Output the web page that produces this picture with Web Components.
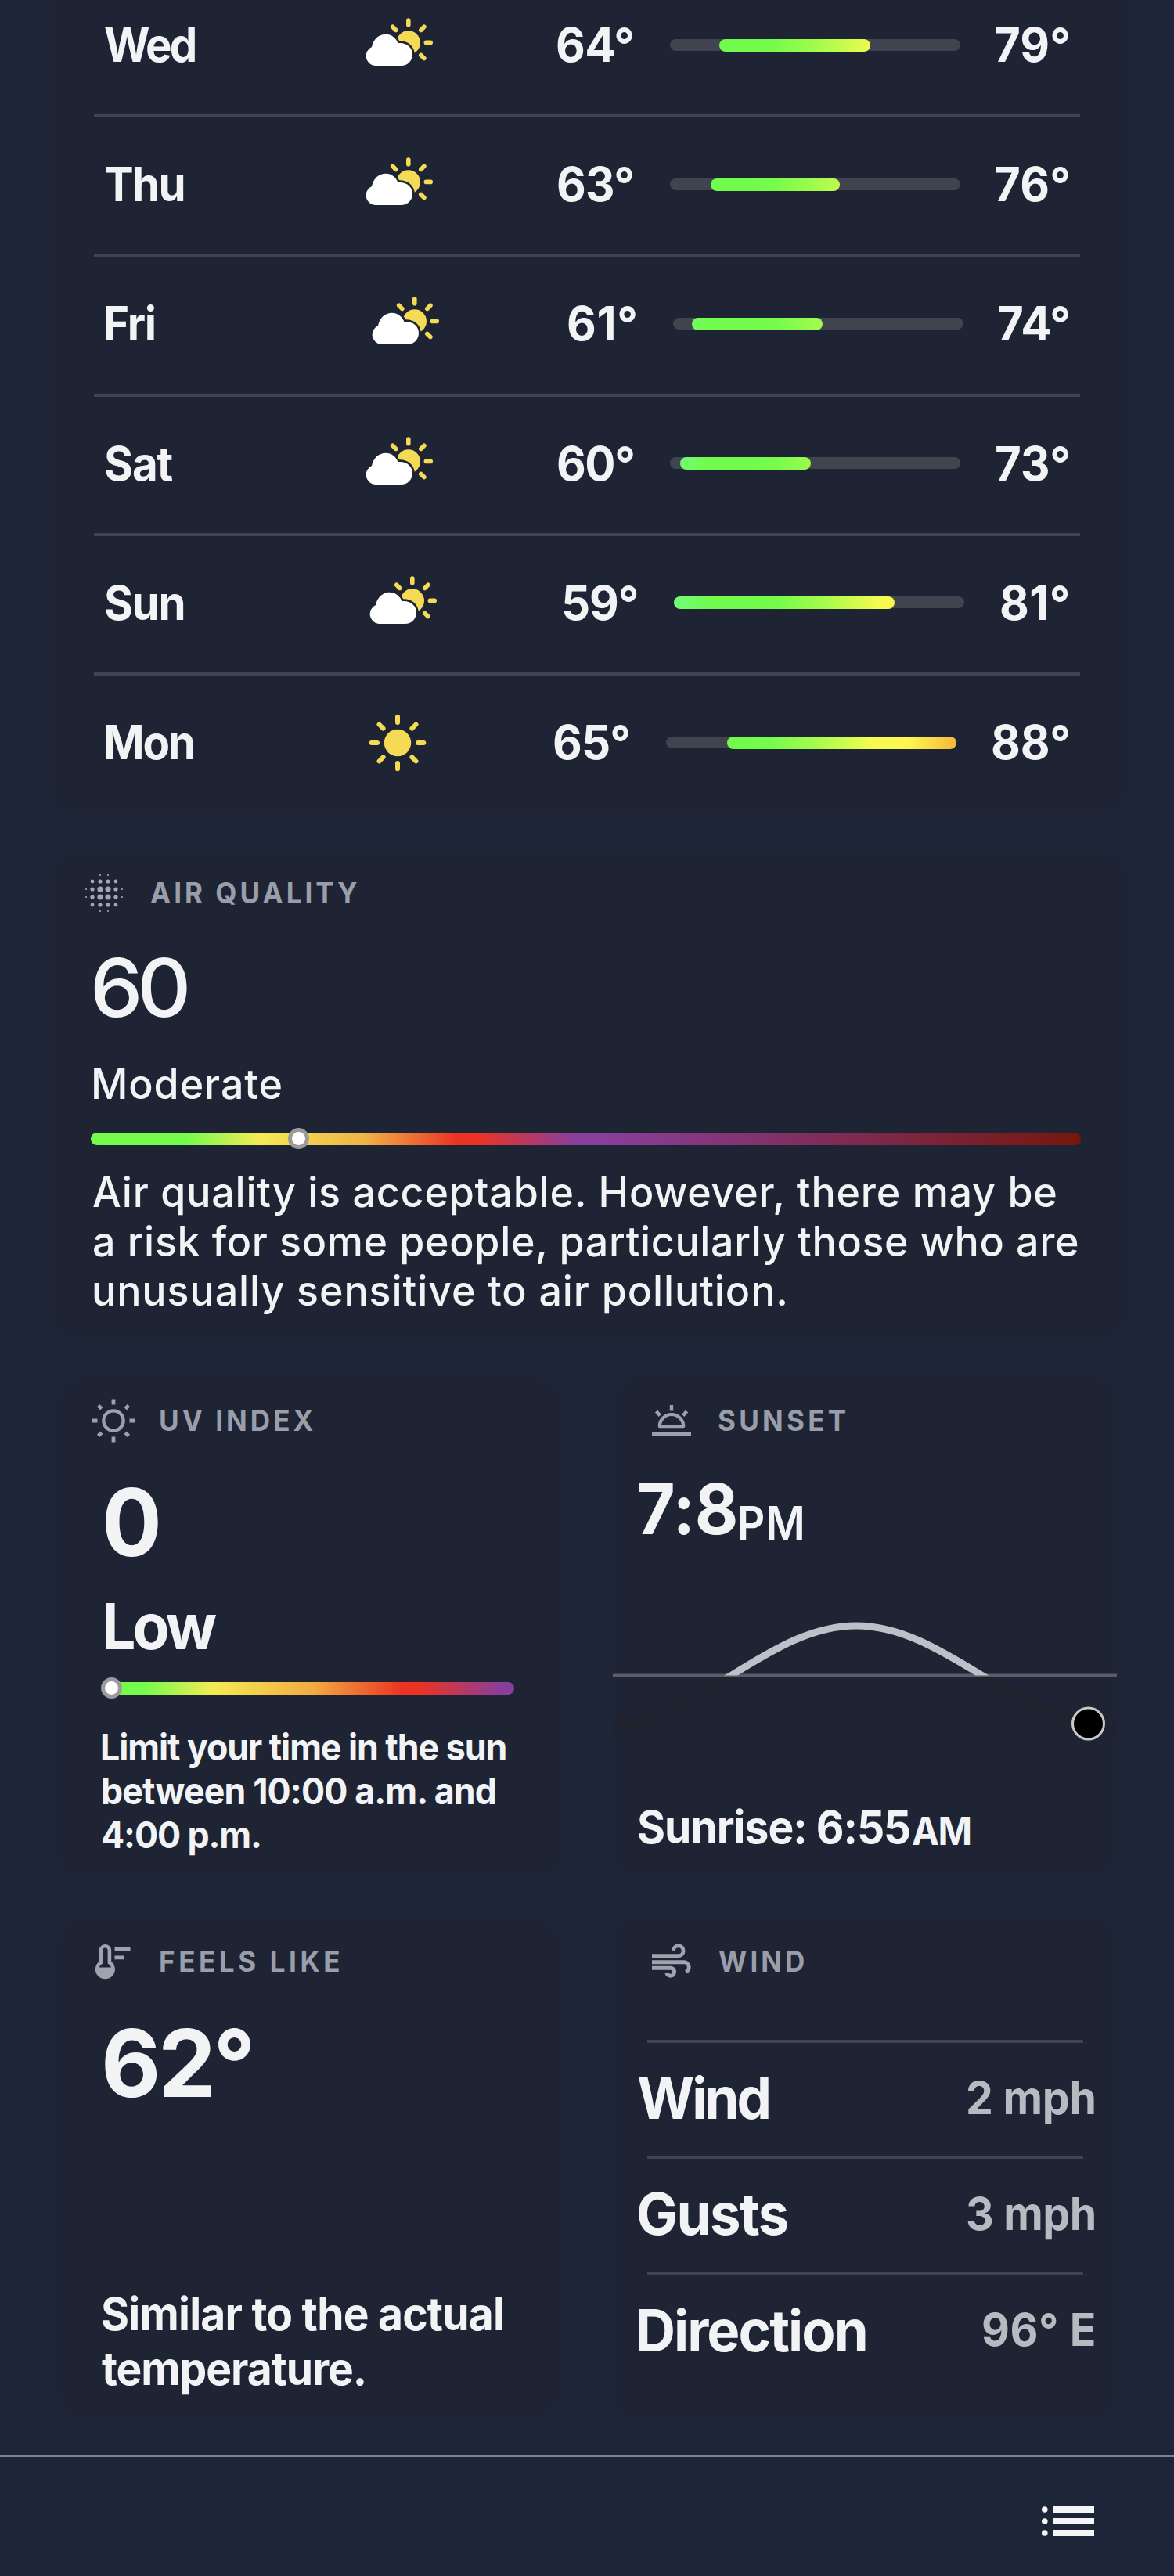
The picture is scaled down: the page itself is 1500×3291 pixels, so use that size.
<!DOCTYPE html>
<html lang="en">
<head>
<meta charset="utf-8">
<title>Weather</title>
<style>
html,body{margin:0;padding:0;background:#1d2638;}
body{width:1500px;height:3291px;overflow:hidden;font-family:Inter,"Noto Sans",sans-serif;color:#f1f3f5;}
</style>
</head>
<body>
<weather-app></weather-app>
<script>
const pen = document.createElement('canvas').getContext('2d');

/* A line of text, slightly condensed, tracked so that its ink spans exactly `w` pixels. */
class InkText extends HTMLElement {
  connectedCallback() {
    const text = this.getAttribute('text');
    const size = +this.getAttribute('size');
    const weight = this.getAttribute('weight') || '700';
    const w = +this.getAttribute('w');
    const line = this.getAttribute('line') || Math.round(size * 1.2);
    const k = +(this.getAttribute('squeeze') || 0.955);
    this.attachShadow({ mode: 'open' }).innerHTML = `
      <style>
        :host{display:block;width:${w}px;height:${line}px;flex:none}
        span{display:block;width:max-content;white-space:pre;font:${weight} ${size}px/${line}px Inter,"Noto Sans",sans-serif;
          font-optical-sizing:none;transform-origin:0 50%}
      </style><span>${text}</span>`;
    const span = this.shadowRoot.querySelector('span');
    const side = ch => {
      pen.font = `${weight} ${size}px Inter`;
      const m = pen.measureText(ch);
      return [-m.actualBoundingBoxLeft, m.width - m.actualBoundingBoxRight];
    };
    const left = side(text[0])[0] * 0.72, right = side(text[text.length - 1])[1];
    const ink = span.getBoundingClientRect().width - left - right;
    const n = text.length - 1;
    span.style.letterSpacing = (n > 0 ? (w / k - ink) / n : 0).toFixed(3) + 'px';
    span.style.marginLeft = (-left * k).toFixed(2) + 'px';
    span.style.transform = `scaleX(${k})`;
  }
}
customElements.define('ink-text', InkText);

const ray = (cx, cy, a, b, angles) => angles.map(t => {
  const r = t * Math.PI / 180, c = Math.cos(r), s = Math.sin(r);
  return `M${(cx + a * c).toFixed(1)} ${(cy + a * s).toFixed(1)}L${(cx + b * c).toFixed(1)} ${(cy + b * s).toFixed(1)}`;
}).join('');

const hazeDots = () => {
  const p = [-23, -15, -5, 5, 15, 23];
  let out = '';
  for (const x of p) for (const y of p) {
    const far = Math.max(Math.abs(x), Math.abs(y)), near = Math.min(Math.abs(x), Math.abs(y));
    if (far === 23 && near !== 5) continue;
    const r = far === 23 ? 1.1 : far === 5 ? 3.6 : near === 5 ? 2.6 : 2.4;
    out += `<circle cx="${24 + x}" cy="${25 + y}" r="${r}"/>`;
  }
  return out;
};

const ICONS = {
  cloudsun: [88, 74, `
    <circle cx="55.8" cy="34.4" r="15.2" fill="#f4da55"/>
    <path d="${ray(55.8, 34.4, 22.6, 28.4, [-135, -90, -45, 0, 45])}" stroke="#f4da55" stroke-width="5.6" stroke-linecap="round"/>
    <path d="M13 64A12.6 12.6 0 0 1 9 40C11 30 18 23.8 27 23.8C34 23.8 40 28.5 42.5 35.2C54 34 61 41.5 61 49.5C61 58 54.500 64 46.500 64Z" fill="#fff" stroke="#1e2433" stroke-width="5.5" paint-order="stroke" stroke-linejoin="round"/>`],
  sun: [72, 74, `
    <circle cx="36" cy="38" r="17.2" fill="#f4da55"/>
    <path d="${ray(36, 38, 26, 33.300, [0, 45, 90, 135, 180, 225, 270, 315])}" stroke="#f4da55" stroke-width="6" stroke-linecap="round"/>`],
  haze: [48, 50, `<g fill="#a3a7b2">${hazeDots()}</g>`],
  uv: [56, 56, `
    <circle cx="28" cy="28" r="12.700" fill="none" stroke="#9ca0ac" stroke-width="4.2"/>
    <path d="${ray(28, 28, 20.500, 27.500, [0, 90, 180, 270])}${ray(28, 28, 21.500, 27.500, [45, 135, 225, 315])}" stroke="#9ca0ac" stroke-width="4.8"/>`],
  sunset: [50, 42, `
    <path d="M9.800 28.200A15.200 15.200 0 0 1 40.200 28.200Z" fill="none" stroke="#9ca0ac" stroke-width="4.200" stroke-linejoin="round"/>
    <path d="M0 37.600H50" stroke="#9ca0ac" stroke-width="5.400"/>
    <path d="M25 1V8.500M5.500 9L10.300 14.500M44.500 9L39.700 14.500" stroke="#9ca0ac" stroke-width="4.400"/>`],
  thermo: [46, 46, `
    <path d="M7.500 24V8.500a5.500 5.500 0 0 1 11 0V24A10.200 10.200 0 1 1 7.500 24Z" fill="none" stroke="#9fa3b0" stroke-width="4.600" transform="translate(.4 .2)"/>
    <path d="M3.400 30.500H23.400A10.200 10.200 0 1 1 3.400 30.500Z" fill="#9fa3b0"/>
    <path d="M25.500 7.500H45.500M25.500 17.800H37.500" stroke="#9fa3b0" stroke-width="4.800"/>`],
  wind: [52, 46, `
    <g fill="none" stroke="#9fa3b0" stroke-width="4.900" transform="translate(0 -1.500)">
      <path d="M0 17.200H33.500a6.400 6.400 0 1 0-6.200-6.800" />
      <path d="M0 25.200H41a6.500 6.500 0 0 1 2 12.600"/>
      <path d="M0 32.700H23.500a5 5 0 1 1-4.700 6.300"/>
    </g>`],
  list: [68, 40, `
    <path d="M14 5H67M14 20H67M14 35H67" stroke="#f4f5f8" stroke-width="8"/>
    <g fill="#f4f5f8"><circle cx="3.800" cy="5" r="3.800"/><circle cx="3.800" cy="20" r="3.800"/><circle cx="3.800" cy="35" r="3.800"/></g>`]
};

class WxIcon extends HTMLElement {
  connectedCallback() {
    const [w, h, body] = ICONS[this.getAttribute('name')];
    this.attachShadow({ mode: 'open' }).innerHTML = `
      <style>:host{display:block;flex:none;width:${w}px;height:${h}px}svg{display:block;overflow:visible}</style>
      <svg width="${w}" height="${h}" viewBox="0 0 ${w} ${h}">${body}</svg>`;
  }
}
customElements.define('wx-icon', WxIcon);

/* Rounded gradient scale with an optional round marker. */
class ScaleBar extends HTMLElement {
  connectedCallback() {
    const knob = this.getAttribute('knob');
    this.attachShadow({ mode: 'open' }).innerHTML = `
      <style>
        :host{display:block;position:relative;height:16px;border-radius:8px;background:var(--scale)}
        i{position:absolute;box-sizing:border-box;width:27px;height:27px;left:${knob}px;top:-5.500px;border-radius:50%;background:#fff;border:5.500px solid #9b9b9b}
      </style>${knob === null ? '' : '<i></i>'}`;
  }
}
customElements.define('scale-bar', ScaleBar);

class RangeBar extends HTMLElement {
  connectedCallback() {
    const [start, width] = this.getAttribute('span').split(' ');
    this.attachShadow({ mode: 'open' }).innerHTML = `
      <style>
        :host{display:flex;flex:none;width:371px;height:15px;border-radius:8px;background:#40444f}
        i{display:block;margin-left:${start}px;width:${width}px;height:16px;border-radius:8px;
          background:linear-gradient(90deg,#72fb7a 0,#71fb4c 50px,#74fb4c 130px,#a4fb4c 190px,#f4fb50 262px,#fdf550 310px,#f6b83c 371px) -${start}px 0/371px 16px no-repeat}
      </style><i></i>`;
  }
}
customElements.define('range-bar', RangeBar);

class DayRow extends HTMLElement {
  connectedCallback() {
    const a = n => this.getAttribute(n);
    this.attachShadow({ mode: 'open' }).innerHTML = `
      <style>
        :host{display:flex;align-items:center;box-sizing:border-box;height:178.200px;padding:0 15px 4px 14px;margin:0 60px 0 56px;border-bottom:4px solid #404452}
        :host([last]){border-color:transparent}
        .icon{margin-left:${a('icon-gap')}px}
        .day{width:130px}
        .low{margin-left:auto}
        range-bar{margin:0 ${a('gap')}px 0 47px}
      </style>
      <div class="day"><ink-text text="${a('day')}" w="${a('dw')}" size="60" line="72" squeeze="0.94"></ink-text></div>
      <wx-icon class="icon" name="${a('icon')}"></wx-icon>
      <ink-text class="low" text="${a('low')}" w="${a('lw')}" size="60" line="72" squeeze="0.97"></ink-text>
      <range-bar span="${a('span')}"></range-bar>
      <ink-text text="${a('high')}" w="${a('hw')}" size="60" line="72" squeeze="0.97"></ink-text>`;
  }
}
customElements.define('day-row', DayRow);

class WxCard extends HTMLElement {
  connectedCallback() {
    const icon = this.getAttribute('icon');
    this.attachShadow({ mode: 'open' }).innerHTML = `
      <style>
        :host{display:block;box-sizing:border-box;background:#1e2433;border-radius:38px}
        header{display:flex;align-items:center;height:var(--head,111px);color:#9a9eaa}
        .ic{display:flex;align-items:center;width:var(--title-x);padding-left:var(--icon-x);box-sizing:border-box;flex:none}
      </style>
      ${icon ? `<header><div class="ic"><wx-icon name="${icon}"></wx-icon></div>
      <ink-text text="${this.getAttribute('heading')}" w="${this.getAttribute('hw')}" size="36.500" weight="700" squeeze="0.96" line="44"></ink-text></header>` : ''}
      <slot></slot>`;
  }
}
customElements.define('wx-card', WxCard);

class SunPath extends HTMLElement {
  connectedCallback() {
    const d = 'M0 222C60 213 110 180 152 155C205 122 255 92 311 92C367 92 417 122 471 155C520 184 565 214 644 223';
    this.attachShadow({ mode: 'open' }).innerHTML = `
      <style>:host{display:block;height:315px}svg{display:block}</style>
      <svg width="644" height="315" viewBox="0 0 644 315" fill="none">
        <clipPath id="up"><rect width="644" height="155.500"/></clipPath>
        <path d="${d}" stroke="#20222d" stroke-width="9"/>
        <path d="M0 155.500H644" stroke="#5a5d69" stroke-width="4"/>
        <path d="${d}" stroke="#bdc0c9" stroke-width="9" clip-path="url(#up)"/>
        <circle cx="607.500" cy="217" r="20" fill="#000" stroke="#c9c9cb" stroke-width="3"/>
      </svg>`;
  }
}
customElements.define('sun-path', SunPath);

class WindRow extends HTMLElement {
  connectedCallback() {
    const a = n => this.getAttribute(n);
    this.attachShadow({ mode: 'open' }).innerHTML = `
      <style>
        :host{display:block;height:148.400px}
        hr{margin:0 43px 0 44px;height:4px;border:0;background:#40444f}
        div{display:flex;align-items:center;justify-content:space-between;height:140px;padding:0 29px 0 32px}
        .v{color:#b8bac1;margin-top:-1px}
      </style>
      <hr><div><ink-text text="${a('label')}" w="${a('lw')}" size="74" line="88"></ink-text>
      <ink-text class="v" text="${a('value')}" w="${a('vw')}" size="58" line="70"></ink-text></div>`;
  }
}
customElements.define('wind-row', WindRow);

class WeatherApp extends HTMLElement {
  connectedCallback() {
    const t = (text, w, size, line, weight = 700, squeeze = 0.95) =>
      `<ink-text text="${text}" w="${w}" size="${size}" line="${line}" weight="${weight}" squeeze="${squeeze}"></ink-text>`;
    this.attachShadow({ mode: 'open' }).innerHTML = `
      <style>
        :host{display:flex;flex-direction:column;width:1500px;height:3291px}
        main{flex:none;height:3136px;overflow:hidden}
        .days{margin:-28px 60px 0 64px;height:1067.500px}
        .air{margin:47.500px 60px 0 64px;height:625px;--head:108px;--title-x:128px;--icon-x:44.500px}
        .air .body{padding:0 59px 0 52px}
        .air .body>ink-text,.air .lines{margin-left:3px}
        .grid{display:grid;grid-template-columns:644px 644px;gap:51px 66px;margin:47px 0 0 73px;grid-auto-rows:640px}
        .l{--title-x:131px;--icon-x:44px}
        .feels{--icon-x:48px}
        .r{--title-x:134.500px;--icon-x:50px}
        .l .body{padding:0 60px 0 57px}
        .l .body>ink-text{margin-left:3px}
        .time{display:flex;padding-left:32px}
        footer{box-sizing:border-box;flex:none;height:155px;border-top:3px solid #7a8192;display:flex;align-items:center;justify-content:flex-end;padding:11px 101px 0 0}
      </style>
      <main>
        <wx-card class="days">
          <day-row day="Wed" dw="116" icon="cloudsun" icon-gap="202" low="64°" lw="97" span="63 193" gap="44.5" high="79°" hw="94"></day-row>
          <day-row day="Thu" dw="100" icon="cloudsun" icon-gap="202" low="63°" lw="96" span="52 165" gap="44.5" high="76°" hw="94"></day-row>
          <day-row day="Fri" dw="63" icon="cloudsun" icon-gap="210" low="61°" lw="87" span="24 167" gap="44.5" high="74°" hw="90"></day-row>
          <day-row day="Sat" dw="86" icon="cloudsun" icon-gap="202" low="60°" lw="97" span="13 167" gap="45" high="73°" hw="93"></day-row>
          <day-row day="Sun" dw="100" icon="cloudsun" icon-gap="206.5" low="59°" lw="95" span="0 282" gap="46.5" high="81°" hw="86.5"></day-row>
          <day-row last day="Mon" dw="113" icon="sun" icon-gap="208" low="65°" lw="96" span="78 293" gap="45.5" high="88°" hw="98"></day-row>
        </wx-card>
        <wx-card class="air" icon="haze" heading="AIR QUALITY" hw="264">
          <div class="body">
            ${t('60', 120, 103, 133, 500, 1.04)}
            ${t('Moderate', 240, 53, 115, 500, 0.98)}
            <scale-bar knob="252" style="margin-top:3.500px;--scale:linear-gradient(90deg,#74fb4c 0,#74fb4c 9.500%,#f4eb54 17%,#f0b446 27.500%,#eb3323 37%,#eb3323 39%,#883f9c 49%,#883f9c 51.500%,#76170d 100%)"></scale-bar>
            <div class="lines" style="margin-top:29px">
              ${t('Air quality is acceptable. However, there may be', 1230, 53, 63, 500, 0.98)}
              ${t('a risk for some people, particularly those who are', 1257, 53, 63, 500, 0.98)}
              ${t('unusually sensitive to air pollution.', 884, 53, 63, 500, 0.98)}
            </div>
          </div>
        </wx-card>
        <div class="grid">
          <wx-card class="l" icon="uv" heading="UV INDEX" hw="196">
            <div class="body">
              ${t('0', 70, 120, 150)}
              ${t('Low', 143, 81, 116)}
              <scale-bar knob="-1" style="margin-top:12.500px;--scale:linear-gradient(90deg,#74fb4c 0,#74fb4c 10%,#f4eb54 27%,#f2ac42 51%,#eb3323 73%,#eb3323 77%,#883f9c 97%)"></scale-bar>
              <div style="margin-top:39px">
                ${t('Limit your time in the sun', 516, 47, 56.4)}
                ${t('between 10:00 a.m. and', 502, 47, 56.4)}
                ${t('4:00 p.m.', 201, 47, 56.4)}
              </div>
            </div>
          </wx-card>
          <wx-card class="r" icon="sunset" heading="SUNSET" hw="163">
            <div class="time">${t('7:8', 125, 90, 115)}<ink-text style="margin:18px 0 0 5px" text="PM" w="81" size="59" line="115" weight="600" squeeze="0.93"></ink-text></div>
            <sun-path style="margin-top:-18px"></sun-path>
            <div class="time">${t('Sunrise: 6:55', 347, 58, 69)}<ink-text style="margin:5px 0 0 4px" text="AM" w="74" size="49" line="69"></ink-text></div>
          </wx-card>
          <wx-card class="l feels" icon="thermo" heading="FEELS LIKE" hw="229">
            <div class="body">
              ${t('62°', 188, 120, 150, 700, 0.98)}
              <div style="margin-top:210px">
                ${t('Similar to the actual', 512, 58, 70)}
                ${t('temperature.', 335, 58, 70)}
              </div>
            </div>
          </wx-card>
          <wx-card class="r" icon="wind" heading="WIND" hw="109">
            <div style="padding-top:45px">
              <wind-row label="Wind" lw="168" value="2 mph" vw="162"></wind-row>
              <wind-row label="Gusts" lw="191" value="3 mph" vw="163"></wind-row>
              <wind-row label="Direction" lw="291" value="96° E" vw="143"></wind-row>
            </div>
          </wx-card>
        </div>
      </main>
      <footer><wx-icon name="list"></wx-icon></footer>`;
  }
}
customElements.define('weather-app', WeatherApp);
</script>
</body>
</html>
